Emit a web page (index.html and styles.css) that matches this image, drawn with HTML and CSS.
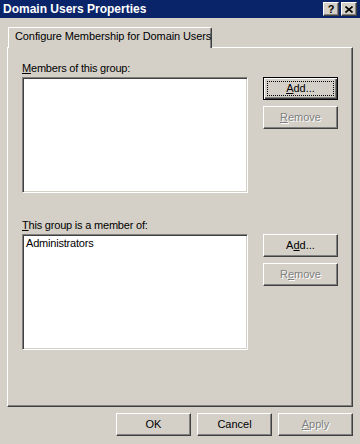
FILE: index.html
```html
<!DOCTYPE html>
<html>
<head>
<meta charset="utf-8">
<link rel="stylesheet" href="styles.css">
</head>
<body>
<div class="window">
  <div class="titlebar">
    <span class="title">Domain Users Properties</span>
    <div class="caption-btns">
      <div class="cbtn help">?</div>
      <div class="cbtn close">
        <svg width="8" height="7" viewBox="0 0 8 7"><path d="M0.5 0.5 L7.5 6.5 M7.5 0.5 L0.5 6.5" stroke="#000" stroke-width="1.6" fill="none"/></svg>
      </div>
    </div>
  </div>
  <div class="tabs">
    <div class="tab">Configure Membership for Domain Users</div>
  </div>
  <div class="panel">
    <div class="section">
      <div class="label"><u>M</u>embers of this group:</div>
      <div class="listbox"></div>
      <div class="btncol">
        <button class="btn default"><span class="focus"><u>A</u>dd...</span></button>
        <button class="btn disabled"><span class="txt"><u>R</u>emove</span></button>
      </div>
    </div>
    <div class="section second">
      <div class="label"><u>T</u>his group is a member of:</div>
      <div class="listbox"><div class="item">Administrators</div></div>
      <div class="btncol">
        <button class="btn"><span class="txt">A<u>d</u>d...</span></button>
        <button class="btn disabled"><span class="txt">R<u>e</u>move</span></button>
      </div>
    </div>
  </div>
  <div class="footer">
    <button class="btn"><span class="txt">OK</span></button>
    <button class="btn"><span class="txt">Cancel</span></button>
    <button class="btn disabled"><span class="txt"><u>A</u>pply</span></button>
  </div>
</div>
</body>
</html>
```
FILE: styles.css
```css
html, body {
  margin: 0;
  padding: 0;
}
body {
  width: 360px;
  height: 444px;
  overflow: hidden;
  background: #d4d0c8;
  font-family: "Liberation Sans", Arial, sans-serif;
  font-size: 11px;
  color: #000;
}
.window {
  width: 360px;
  height: 444px;
  background: #d4d0c8;
}
.titlebar {
  height: 18px;
  background: #0a246a;
  display: flex;
  align-items: center;
  justify-content: space-between;
  padding: 0 3px 0 3px;
}
.title {
  color: #fff;
  font-weight: bold;
  font-size: 12px;
  line-height: 14px;
}
.caption-btns {
  display: flex;
  gap: 2px;
}
.cbtn {
  box-sizing: border-box;
  width: 16px;
  height: 14px;
  background: #d4d0c8;
  border: 1px solid;
  border-color: #fff #404040 #404040 #fff;
  box-shadow: inset -1px -1px #808080, inset 1px 1px #d4d0c8;
  display: flex;
  align-items: center;
  justify-content: center;
}
.help {
  font-weight: bold;
  font-size: 11px;
  line-height: 11px;
}
.tabs {
  padding: 9px 0 0 8px;
  display: flex;
}
.tab {
  position: relative;
  z-index: 1;
  box-sizing: border-box;
  width: 204px;
  height: 21px;
  margin-bottom: -1px;
  background: #d4d0c8;
  border-top: 1px solid #fff;
  border-left: 1px solid #fff;
  border-right: 1px solid #404040;
  box-shadow: inset -1px 0 #808080;
  border-top-right-radius: 2px;
  padding: 2px 0 0 6px;
  line-height: 13px;
  letter-spacing: -0.1px;
  white-space: nowrap;
}
.panel {
  box-sizing: border-box;
  margin-left: 7px;
  width: 346px;
  height: 360px;
  border: 1px solid;
  border-color: #fff #404040 #404040 #fff;
  box-shadow: inset -1px -1px #808080;
  padding: 14px 0 0 14px;
}
.section {
  display: grid;
  grid-template-columns: 226px 75px;
  column-gap: 15px;
  grid-template-rows: 15px 116px;
}
.section.second {
  margin-top: 26px;
}
.label {
  grid-column: 1;
  grid-row: 1;
  line-height: 13px;
  letter-spacing: -0.2px;
  white-space: nowrap;
}
.listbox {
  grid-column: 1;
  grid-row: 2;
  box-sizing: border-box;
  background: #fff;
  border: 1px solid;
  border-color: #808080 #fff #fff #808080;
  box-shadow: inset 1px 1px #404040, inset -1px -1px #d4d0c8;
  padding: 2px 0 0 2px;
}
.item {
  line-height: 13px;
  padding-left: 1px;
  letter-spacing: -0.2px;
}
.btncol {
  grid-column: 2;
  grid-row: 2;
  display: flex;
  flex-direction: column;
  gap: 6px;
}
.btn {
  box-sizing: border-box;
  width: 75px;
  height: 23px;
  margin: 0;
  padding: 0;
  background: #d4d0c8;
  font: inherit;
  color: #000;
  border: 1px solid;
  border-color: #fff #404040 #404040 #fff;
  box-shadow: inset -1px -1px #808080, inset 1px 1px #d4d0c8;
  display: flex;
  align-items: center;
  justify-content: center;
}
.btn.default {
  border-color: #000;
  box-shadow: inset 1px 1px #fff, inset -1px -1px #404040, inset -2px -2px #808080;
  padding: 3px;
}
.focus {
  box-sizing: border-box;
  width: 100%;
  height: 100%;
  border: 1px dotted #000;
  display: flex;
  align-items: center;
  justify-content: center;
  line-height: 13px;
}
.txt {
  line-height: 13px;
}
.btn.disabled {
  color: #808080;
  text-shadow: 1px 1px 0 #fff;
}
.footer {
  display: flex;
  justify-content: flex-end;
  gap: 6px;
  padding: 6px 7px 0 0;
}
```
